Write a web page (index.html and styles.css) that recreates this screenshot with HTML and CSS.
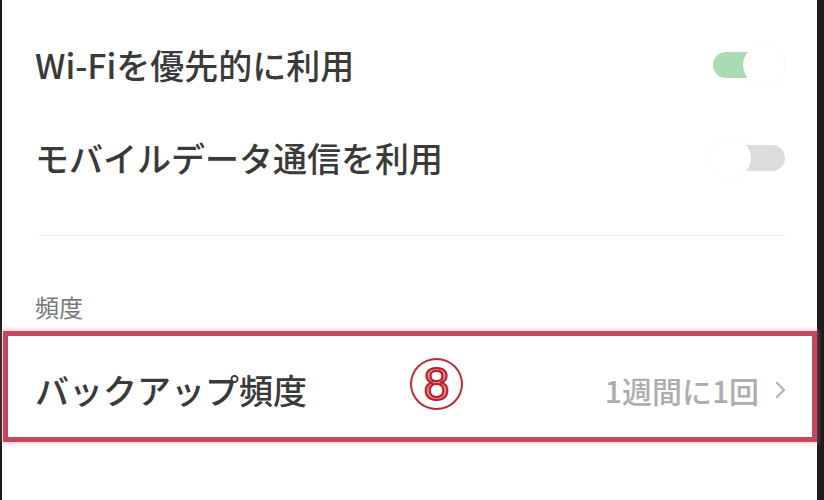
FILE: index.html
```html
<!DOCTYPE html>
<html lang="ja">
<head>
<meta charset="utf-8">
<link rel="stylesheet" href="styles.css">
</head>
<body>
<div class="frame">
  <div class="edge edge-left"></div>
  <main class="settings">
    <div class="row">
      <span class="row-title">Wi-Fiを優先的に利用</span>
      <span class="toggle toggle-on"><span class="track"></span><span class="knob"></span></span>
    </div>
    <div class="row">
      <span class="row-title">モバイルデータ通信を利用</span>
      <span class="toggle toggle-off"><span class="track"></span><span class="knob"></span></span>
    </div>
    <div class="divider"></div>
    <div class="section-label">頻度</div>
    <div class="row row-highlight">
      <span class="row-title">バックアップ頻度</span>
      <span class="badge">8</span>
      <span class="row-value">1週間に1回
        <svg class="chevron" width="12" height="20" viewBox="0 0 12 20"><polyline points="2,3 9,10 2,17" fill="none" stroke="#b3b3b3" stroke-width="2.4" stroke-linecap="round" stroke-linejoin="round"/></svg>
      </span>
    </div>
  </main>
  <div class="edge edge-right"></div>
</div>
</body>
</html>
```
FILE: styles.css
```css
html, body {
  margin: 0;
  padding: 0;
  background: #ffffff;
}
body {
  width: 824px;
  height: 500px;
  overflow: hidden;
  font-family: "Noto Sans CJK JP", "Noto Sans", sans-serif;
}
.frame {
  display: flex;
  height: 500px;
}
.edge {
  background: #1c1c1c;
  flex: none;
}
.edge-left { width: 2px; }
.edge-right { width: 7px; }
.settings {
  flex: 1;
  display: flex;
  flex-direction: column;
  padding-top: 18px;
  background: #fff;
}
.row {
  height: 93px;
  display: flex;
  align-items: center;
  justify-content: space-between;
  padding: 0 32px 0 33px;
}
.row-title {
  font-size: 34px;
  line-height: 40px;
  font-weight: 500;
  color: #3a3a3a;
}
.toggle {
  position: relative;
  width: 76px;
  height: 44px;
  flex: none;
}
.toggle .track {
  position: absolute;
  left: 4px;
  right: 0;
  top: 9px;
  height: 26px;
  border-radius: 13px;
}
.toggle .knob {
  position: absolute;
  top: 1px;
  width: 42px;
  height: 42px;
  border-radius: 50%;
  background: #fff;
  box-shadow: 0 0 2px rgba(0, 0, 0, 0.07);
}
.toggle-on .track { background: #a9dbb4; }
.toggle-on .knob { right: 0; }
.toggle-off .track { background: #dcdcdc; }
.toggle-off .knob { left: 0; }
.divider {
  margin: 31px 32px 0 37px;
  height: 1px;
  background: #ececec;
}
.section-label {
  margin: 59px 0 0 33px;
  font-size: 24px;
  line-height: 24px;
  color: #7a7a7a;
}
.row-highlight {
  position: relative;
  box-sizing: border-box;
  height: 111px;
  margin: 12px 0 0 1px;
  padding: 6px 25px 0 27px;
  border: 5px solid #c4485c;
  box-shadow: 0 0 4px 2px rgba(232, 130, 150, 0.35);
}
.badge {
  position: absolute;
  left: 402px;
  top: 22px;
  box-sizing: border-box;
  width: 53px;
  height: 52px;
  border: 2.5px solid #c02a36;
  border-radius: 50%;
  display: flex;
  align-items: center;
  justify-content: center;
  font-family: "Liberation Sans", sans-serif;
  font-size: 46px;
  line-height: 1;
  font-weight: normal;
  color: #e7868f;
  -webkit-text-stroke: 2px #b81e2a;
}
.row-value {
  display: flex;
  align-items: center;
  gap: 16px;
  font-size: 30px;
  line-height: 40px;
  font-weight: 500;
  color: #adadad;
}
.chevron { display: block; }
```
